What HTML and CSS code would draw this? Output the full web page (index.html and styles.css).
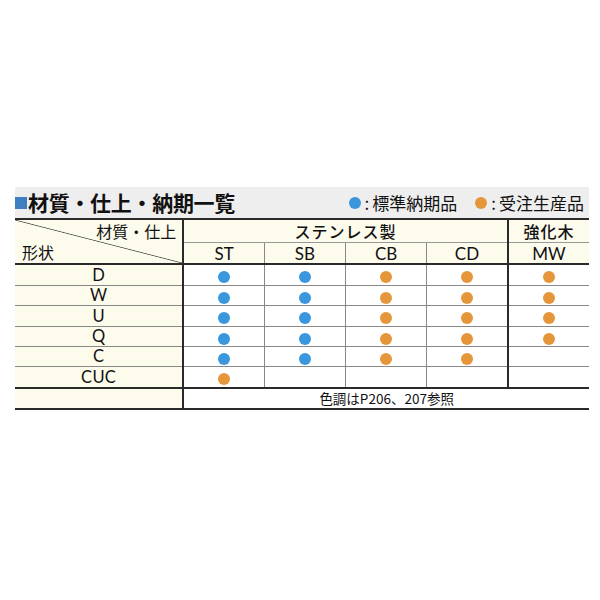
FILE: index.html
```html
<!DOCTYPE html>
<html lang="ja">
<head>
<meta charset="utf-8">
<link rel="stylesheet" href="styles.css">
</head>
<body>
<div class="panel">
  <div class="titlebar">
    <h1 class="title"><span class="sq"></span>材質・仕上・納期一覧</h1>
    <div class="legend">
      <span class="dot blue"></span><span class="colon">:</span><span class="lg">標準納期品</span>
      <span class="dot orange lgap"></span><span class="colon">:</span><span class="lg">受注生産品</span>
    </div>
  </div>
  <table class="grid">
    <colgroup>
      <col class="c-label"><col class="c-d"><col class="c-d"><col class="c-d"><col class="c-d"><col class="c-d">
    </colgroup>
    <tr class="h1">
      <th class="corner" rowspan="2"><span class="ctop">材質・仕上</span><span class="cbot">形状</span></th>
      <th class="grp" colspan="4">ステンレス製</th>
      <th class="grp mw">強化木</th>
    </tr>
    <tr class="h2">
      <th class="sub first">ST</th>
      <th class="sub">SB</th>
      <th class="sub">CB</th>
      <th class="sub">CD</th>
      <th class="sub mw">MW</th>
    </tr>
    <tr class="r a">
      <th class="lab">D</th>
      <td class="first"><span class="dot blue"></span></td>
      <td><span class="dot blue"></span></td>
      <td><span class="dot orange"></span></td>
      <td><span class="dot orange"></span></td>
      <td class="mw"><span class="dot orange"></span></td>
    </tr>
    <tr class="r b">
      <th class="lab">W</th>
      <td class="first"><span class="dot blue"></span></td>
      <td><span class="dot blue"></span></td>
      <td><span class="dot orange"></span></td>
      <td><span class="dot orange"></span></td>
      <td class="mw"><span class="dot orange"></span></td>
    </tr>
    <tr class="r a">
      <th class="lab">U</th>
      <td class="first"><span class="dot blue"></span></td>
      <td><span class="dot blue"></span></td>
      <td><span class="dot orange"></span></td>
      <td><span class="dot orange"></span></td>
      <td class="mw"><span class="dot orange"></span></td>
    </tr>
    <tr class="r b">
      <th class="lab">Q</th>
      <td class="first"><span class="dot blue"></span></td>
      <td><span class="dot blue"></span></td>
      <td><span class="dot orange"></span></td>
      <td><span class="dot orange"></span></td>
      <td class="mw"><span class="dot orange"></span></td>
    </tr>
    <tr class="r b">
      <th class="lab">C</th>
      <td class="first"><span class="dot blue"></span></td>
      <td><span class="dot blue"></span></td>
      <td><span class="dot orange"></span></td>
      <td><span class="dot orange"></span></td>
      <td class="mw"></td>
    </tr>
    <tr class="r a last">
      <th class="lab">CUC</th>
      <td class="first"><span class="dot orange"></span></td>
      <td></td>
      <td></td>
      <td></td>
      <td class="mw"></td>
    </tr>
    <tr class="note">
      <th class="lab"></th>
      <td class="first notecell" colspan="5">色調はP206、207参照</td>
    </tr>
  </table>
</div>
</body>
</html>
```

FILE: styles.css
```css
html, body {
  margin: 0;
  padding: 0;
  background: #ffffff;
}
body {
  font-family: "Noto Sans CJK JP", "Noto Sans", sans-serif;
  color: #111111;
}
.panel {
  width: 574px;
  margin: 187px 0 0 15px;
}
.titlebar {
  height: 31px;
  background: #eeeeee;
  display: flex;
  align-items: center;
  justify-content: space-between;
}
.title {
  margin: 0;
  font-size: 21px;
  font-weight: 700;
  line-height: 31px;
  display: flex;
  align-items: center;
  letter-spacing: -0.3px;
}
.sq {
  display: inline-block;
  width: 12px;
  height: 12px;
  background: #3d7fc1;
  margin-right: 1px;
}
.legend {
  display: flex;
  align-items: center;
  font-size: 17px;
  padding-right: 5px;
}
.lg {
  line-height: 31px;
}
.colon {
  line-height: 31px;
  margin: 0 3px 0 4px;
}
.lgap {
  margin-left: 18px;
}
.dot {
  display: inline-block;
  width: 12px;
  height: 12px;
  border-radius: 50%;
  vertical-align: middle;
}
.dot.blue { background: #3a97dd; }
.dot.orange { background: #e6963a; }

.grid {
  width: 574px;
  border-collapse: collapse;
  table-layout: fixed;
}
.c-label { width: 168px; }
.c-d { width: 81px; }
.grid th, .grid td {
  padding: 0;
  font-weight: 400;
  text-align: center;
  line-height: 1;
}
.h1 th {
  border-top: 2px solid #2a2a2a;
  background: #fdfbec;
  font-size: 16px;
  letter-spacing: 1px;
  font-weight: 500;
  height: 22px;
}
.h1 .grp {
  border-bottom: 1px solid #999999;
}
.h1 .mw { border-left: 2px solid #2a2a2a; }
.corner {
  position: relative;
  border-right: 2px solid #2a2a2a;
  border-bottom: 2px solid #2a2a2a;
  background: #fdfbec linear-gradient(to top right, transparent calc(50% - 0.8px), #555555 50%, transparent calc(50% + 0.8px)) !important;
  vertical-align: top;
}
.ctop {
  position: absolute;
  right: 6px;
  top: 3px;
  font-size: 16px;
  letter-spacing: 0;
  font-weight: 400;
}
.cbot {
  position: absolute;
  left: 7px;
  bottom: 3px;
  font-size: 16px;
  letter-spacing: 0;
  font-weight: 400;
}
.h2 th {
  background: #fdfbec;
  border-bottom: 2px solid #2a2a2a;
  border-left: 1px solid #888888;
  font-family: Lato, "Noto Sans CJK JP", sans-serif;
  font-size: 17px;
  height: 20px;
}
.h2 th.mw { border-left: 2px solid #2a2a2a; }
.r th, .r td {
  border-bottom: 1px solid #888888;
  height: 19px;
}
.r.a th, .r.a td { height: 20px; }
.r.last th, .r.last td { border-bottom: 2px solid #2a2a2a; }
.r td { border-left: 1px solid #888888; background: #ffffff; }
.r td.mw { border-left: 2px solid #2a2a2a; }
.lab {
  background: #fdfbec;
  border-right: 2px solid #2a2a2a;
  font-family: Lato, "Noto Sans CJK JP", sans-serif;
  font-size: 16.5px;
  letter-spacing: 0.3px;
}
.note th, .note td {
  border-bottom: 2px solid #2a2a2a;
  height: 19px;
}
.notecell {
  font-size: 13.5px;
  background: #ffffff;
}
```
